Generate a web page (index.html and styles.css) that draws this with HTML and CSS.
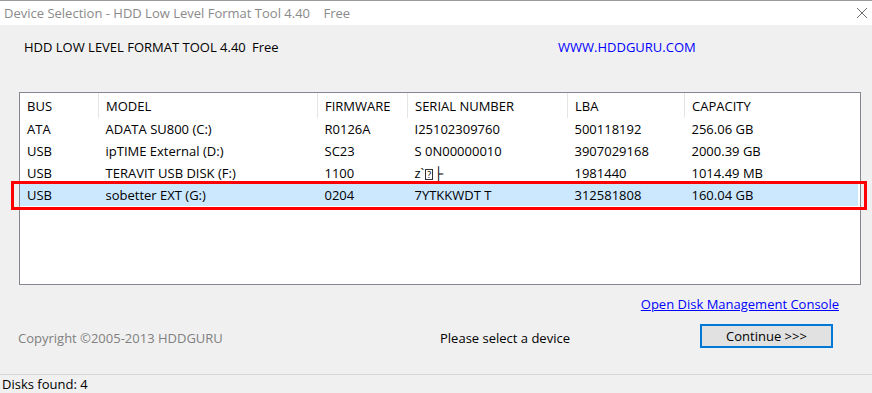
FILE: index.html
```html
<!DOCTYPE html>
<html lang="en">
<head>
    <meta charset="UTF-8">
    <title>Device Selection - HDD Low Level Format Tool 4.40</title>
    <link rel="stylesheet" href="styles.css">
</head>
<body>
    <div class="window">
        <div class="titlebar">
            <span class="title">Device Selection - HDD Low Level Format Tool 4.40&nbsp;&nbsp;&nbsp;&nbsp;Free</span>
            <svg class="close" width="12" height="12" viewBox="0 0 12 12">
                <path d="M1 1 L11 11 M11 1 L1 11" stroke="#6d6d6d" stroke-width="1" fill="none"/>
            </svg>
        </div>

        <div class="content">
            <div class="header">
                <span class="product">HDD LOW LEVEL FORMAT TOOL 4.40</span>
                <span class="free">Free</span>
                <span class="site">WWW.HDDGURU.COM</span>
            </div>

            <div class="listbox">
                <table class="devices">
                    <thead>
                        <tr>
                            <th class="c-bus">BUS</th>
                            <th class="c-model">MODEL</th>
                            <th class="c-fw">FIRMWARE</th>
                            <th class="c-sn">SERIAL NUMBER</th>
                            <th class="c-lba">LBA</th>
                            <th class="c-cap">CAPACITY</th>
                        </tr>
                    </thead>
                    <tbody>
                        <tr>
                            <td>ATA</td><td>ADATA SU800 (C:)</td><td>R0126A</td><td>I25102309760</td><td>500118192</td><td>256.06 GB</td>
                        </tr>
                        <tr>
                            <td>USB</td><td>ipTIME External (D:)</td><td>SC23</td><td>S 0N00000010</td><td>3907029168</td><td>2000.39 GB</td>
                        </tr>
                        <tr>
                            <td>USB</td><td>TERAVIT USB DISK (F:)</td><td>1100</td><td>z`<span class="box">?</span>├</td><td>1981440</td><td>1014.49 MB</td>
                        </tr>
                        <tr class="selected">
                            <td>USB</td><td>sobetter EXT (G:)</td><td>0204</td><td>7YTKKWDT T</td><td>312581808</td><td>160.04 GB</td>
                        </tr>
                    </tbody>
                </table>
                <div class="highlight"></div>
            </div>

            <div class="linkrow">
                <a class="console-link" href="#">Open Disk Management Console</a>
            </div>

            <div class="bottom">
                <span class="copyright">Copyright ©2005-2013 HDDGURU</span>
                <span class="prompt">Please select a device</span>
                <button class="continue">Continue &gt;&gt;&gt;</button>
            </div>
        </div>

        <div class="statusbar">Disks found: 4</div>
    </div>
</body>
</html>
```

FILE: styles.css
```css
body {
    margin: 0;
    font-family: "Open Sans", "Noto Sans", sans-serif;
    font-size: 13px;
    color: #000;
    background: #f0f0f0;
}
.window {
    width: 872px;
    height: 393px;
    display: flex;
    flex-direction: column;
    overflow: hidden;
}
.titlebar {
    height: 25px;
    background: #fff;
    border-top: 1px solid #9a9a9a;
    box-sizing: border-box;
    display: flex;
    align-items: center;
    justify-content: space-between;
    padding: 0 4px 0 4px;
}
.title {
    color: #8a8a8a;
    white-space: pre;
}
.close {
    display: block;
}
.content {
    flex: 1;
    display: flex;
    flex-direction: column;
    padding: 0 11px 0 19px;
}
.header {
    height: 44px;
    display: flex;
    align-items: center;
    padding-left: 5px;
}
.product {
    width: 228px;
}
.free {
    width: 306px;
}
.site {
    color: #0000ff;
}
.listbox {
    position: relative;
    margin-top: 23px;
    height: 193px;
    width: 842px;
    box-sizing: border-box;
    border: 1px solid #828790;
    background: #fff;
}
.devices {
    border-collapse: collapse;
    table-layout: fixed;
    width: 838px;
}
.devices th,
.devices td {
    text-align: left;
    font-weight: normal;
    padding: 0 0 0 7px;
    height: 22px;
    white-space: nowrap;
    overflow: hidden;
}
.devices th {
    height: 25px;
    border-right: 1px solid #e5e5e5;
}
.devices th:last-child {
    border-right: none;
}
.c-bus { width: 71px; }
.c-model { width: 211px; }
.c-fw { width: 82px; }
.c-sn { width: 152px; }
.c-lba { width: 109px; }
.devices tr.selected td {
    background: #cce8ff;
}
.box {
    font-size: 9px;
    border: 1px solid #333;
    padding: 0 1px;
    line-height: 9px;
    display: inline-block;
    margin: 0 1px;
}
.highlight {
    position: absolute;
    left: -9px;
    top: 88px;
    width: 856px;
    height: 29px;
    box-sizing: border-box;
    border: 3px solid #ff0000;
}
.linkrow {
    display: flex;
    justify-content: flex-end;
    padding-right: 22px;
    margin-top: 10px;
}
.console-link {
    color: #0000ff;
    text-decoration: underline;
}
.bottom {
    display: flex;
    align-items: center;
    margin-top: 11px;
    height: 28px;
}
.copyright {
    color: #808080;
    margin-left: -1px;
    width: 422px;
}
.prompt {
    width: 260px;
}
.continue {
    font-family: inherit;
    font-size: 13px;
    width: 133px;
    height: 24px;
    margin-top: -4px;
    background: #e1e1e1;
    border: 2px solid #0078d7;
    color: #000;
    padding: 0;
}
.statusbar {
    height: 17px;
    border-top: 1px solid #d7d7d7;
    padding: 1px 0 0 2px;
    line-height: 17px;
}
```
